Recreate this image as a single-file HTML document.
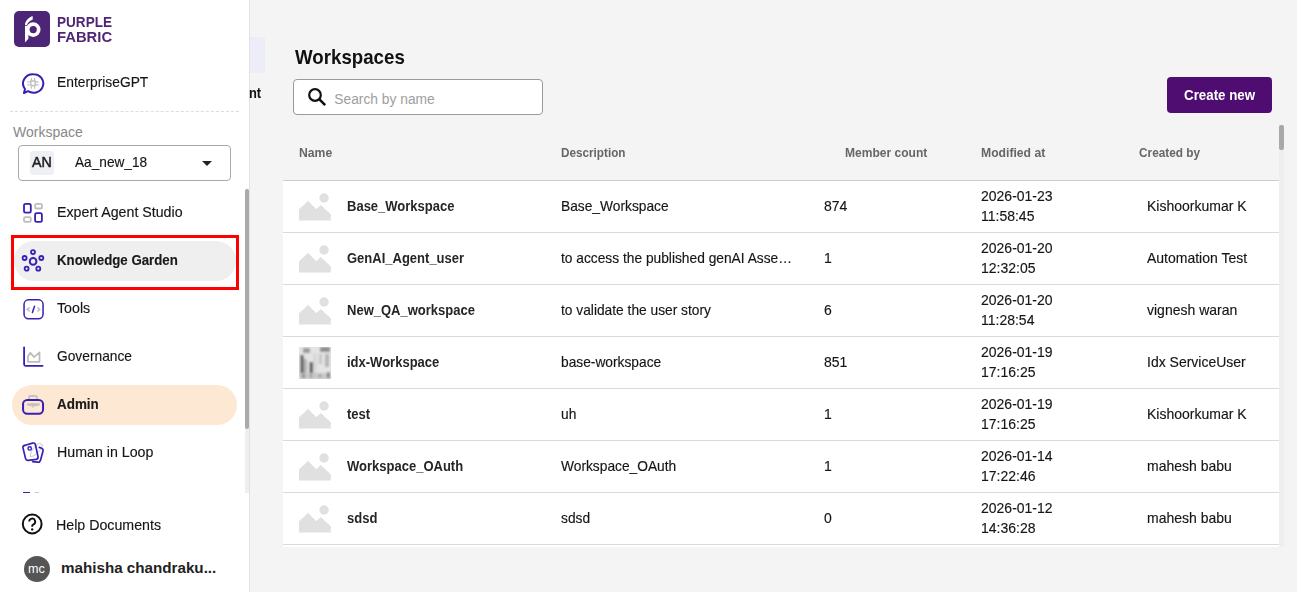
<!DOCTYPE html>
<html><head><meta charset="utf-8">
<style>
*{box-sizing:border-box;margin:0;padding:0}
html,body{width:1297px;height:592px;overflow:hidden;background:#f4f4f4;font-family:"Liberation Sans",sans-serif;color:#1f1f1f}
.abs{position:absolute}
#side{position:absolute;left:0;top:0;width:250px;height:592px;background:#fff;border-right:1px solid #e2e2e2}
#main{position:absolute;left:250px;top:0;width:1047px;height:592px;background:#f4f4f4}
.t{position:absolute;white-space:nowrap;line-height:1}
.nl{left:57px;font-size:15px;color:#151515;-webkit-text-stroke:0.15px #151515;transform:scaleX(0.947);transform-origin:0 0}
.row{position:absolute;left:283px;width:996px;height:52px;background:#fff;border-bottom:1px solid #dadada}
.row .t{font-size:14.6px;color:#151515;-webkit-text-stroke:0.15px #151515;transform:scaleX(0.959);transform-origin:0 0}
.row .nm{left:64px;top:17.9px;font-weight:700;font-size:14.5px;color:#262626;-webkit-text-stroke:0;transform:scaleX(0.897);transform-origin:0 0}
.row .ds{left:278px;top:17.75px;transform:scaleX(0.943)}
.row .mc{left:541px;top:17.8px}
.row .d1{left:698px;top:8.1px}
.row .d2{left:698px;top:28.3px}
.row .cb{left:863.8px;top:17.6px}
.row .img{position:absolute;left:16px;top:12px}
.hdr{position:absolute;top:147.1px;transform-origin:0 0;font-size:12.5px;font-weight:700;color:#666;white-space:nowrap;line-height:1}
</style></head><body>
<div id="side">
  <!-- logo -->
  <div class="abs" style="left:14px;top:11px;width:36px;height:36px;background:#4d2577;border-radius:5px"></div>
  <svg class="abs" style="left:14px;top:11px" width="36" height="36" viewBox="0 0 36 36">
    <path d="M11 14.2 C11 10.5 13.8 6.8 18.6 5 L18.8 8.6 C16.2 9.6 13.6 11.6 12.9 14.2 Z" fill="#fff"/>
    <path d="M11 15 L14.6 15 L14.4 27.8 L11 31.6 Z" fill="#fff"/>
    <circle cx="19.2" cy="18.6" r="5.5" fill="none" stroke="#fff" stroke-width="3.7"/>
  </svg>
  <div class="t" style="left:57px;top:13.7px;font-size:15.5px;font-weight:700;color:#4f2673;line-height:15px;transform:scaleX(0.875);transform-origin:0 0">PURPLE</div>
  <div class="t" style="left:57px;top:28.7px;font-size:15.5px;font-weight:700;color:#4f2673;line-height:15px;transform:scaleX(0.955);transform-origin:0 0">FABRIC</div>

  <!-- EnterpriseGPT -->
  <svg class="abs" style="left:22px;top:73px" width="23" height="21" viewBox="0 0 23 21">
    <path d="M11.5 1.2 A9.8 9.3 0 1 1 6 18.2 L2 20 L3 16 A9.8 9.3 0 0 1 11.5 1.2Z" fill="none" stroke="#3a1fb5" stroke-width="2" stroke-linejoin="round"/>
    <rect x="8.7" y="8" width="4.6" height="4.6" fill="none" stroke="#c2c2c2" stroke-width="1.6"/>
    <path d="M9.4 5v2.2M12.6 5v2.2M9.4 13.4v2.3M12.6 13.4v2.3M5.2 8.8h2.3M5.2 11.8h2.3M14.1 8.8h2.5M14.1 11.8h2.5" stroke="#c2c2c2" stroke-width="1.3"/>
  </svg>
  <div class="t" style="left:57px;top:74.3px;font-size:15px;color:#151515;-webkit-text-stroke:0.15px #151515;transform:scaleX(0.92);transform-origin:0 0">EnterpriseGPT</div>

  <div class="abs" style="left:10px;top:111px;width:229px;border-top:1px dashed #ddd"></div>

  <div class="t" style="left:13px;top:125px;font-size:14px;color:#888">Workspace</div>

  <!-- select -->
  <div class="abs" style="left:18px;top:145px;width:213px;height:36px;border:1px solid #a9a9a9;border-radius:4px"></div>
  <div class="abs" style="left:30px;top:151px;width:24px;height:24px;background:#eef0f5;border-radius:3px"></div>
  <div class="t" style="left:32.3px;top:154.3px;font-size:15px;color:#222;-webkit-text-stroke:0.5px #222;transform:scaleX(0.95);transform-origin:0 0">AN</div>
  <div class="t" style="left:74.5px;top:154.3px;font-size:15px;color:#151515;-webkit-text-stroke:0.15px #151515;transform:scaleX(0.91);transform-origin:0 0">Aa_new_18</div>
  <svg class="abs" style="left:201px;top:160px" width="12" height="7" viewBox="0 0 12 7"><path d="M1 1h10L6 6z" fill="#222"/></svg>

  <!-- nav -->
  <svg class="abs" style="left:18px;top:198px" width="30" height="30" viewBox="0 0 30 30" fill="none" stroke-width="1.8">
    <rect x="6" y="5.9" width="6.8" height="8.7" rx="1.6" stroke="#3a1fb5"/>
    <rect x="17.1" y="5.9" width="6.8" height="4.6" rx="1.6" stroke="#bdbdbd"/>
    <rect x="6" y="19.1" width="6.8" height="4.8" rx="1.6" stroke="#bdbdbd"/>
    <rect x="17.1" y="15.1" width="6.8" height="8.8" rx="1.6" stroke="#3a1fb5"/>
  </svg>
  <div class="t nl" style="top:204.3px">Expert Agent Studio</div>

  <div class="abs" style="left:11px;top:235px;width:228px;height:55px;border:3px solid #ff0000"></div>
  <div class="abs" style="left:14px;top:241px;width:222px;height:40px;background:#efefef;border-radius:20px"></div>
  <svg class="abs" style="left:18px;top:245px" width="30" height="30" viewBox="0 0 30 30" fill="none" stroke="#3a1fb5">
    <path d="M15 13L15 9.5M13 14.5L8.5 13.5M17.2 14.5L21.3 13.5M13 19L10.2 21.8M17.2 19L19 21.8" stroke="#d8dcc8" stroke-width="0.8"/>
    <circle cx="15.1" cy="16.4" r="3.3" stroke-width="2"/>
    <circle cx="15" cy="7.1" r="2" stroke-width="1.8"/>
    <circle cx="6.6" cy="13" r="2" stroke-width="1.8"/>
    <circle cx="23.3" cy="13" r="2" stroke-width="1.8"/>
    <circle cx="8.6" cy="23.7" r="2" stroke-width="1.8"/>
    <circle cx="20.3" cy="23.7" r="2" stroke-width="1.8"/>
  </svg>
  <div class="t nl" style="top:252px;font-size:15.2px;color:#1a1a1a;font-weight:700;transform:scaleX(0.873)">Knowledge Garden</div>

  <svg class="abs" style="left:18px;top:293px" width="30" height="30" viewBox="0 0 30 30" fill="none">
    <rect x="6.05" y="6.85" width="19" height="19" rx="4.5" stroke="#3a1fb5" stroke-width="1.5"/>
    <path d="M11.9 14.4L9.1 16.4L11.9 18.5M19.3 14.4L21.8 16.4L19.3 18.5" stroke="#bdbdbd" stroke-width="1.4"/>
    <path d="M16.5 13.2L14.4 19.5" stroke="#3a1fb5" stroke-width="1.5" stroke-linecap="round"/>
  </svg>
  <div class="t nl" style="top:300.3px">Tools</div>

  <svg class="abs" style="left:18px;top:341px" width="30" height="30" viewBox="0 0 30 30" fill="none">
    <path d="M6.1 6.3V23.3Q6.1 24.8 7.6 24.8H24.6" stroke="#3a1fb5" stroke-width="1.8" stroke-linecap="round"/>
    <path d="M9.9 15.2L12.4 11.9L16.2 16.2L21.5 11.4V20.8H9.9Z" stroke="#bdbdbd" stroke-width="1.8" stroke-linejoin="round"/>
  </svg>
  <div class="t nl" style="top:348.3px;transform:scaleX(0.918)">Governance</div>

  <div class="abs" style="left:12px;top:385px;width:225px;height:40px;background:#fde9d3;border-radius:20px"></div>
  <svg class="abs" style="left:18px;top:389px" width="30" height="30" viewBox="0 0 30 30" fill="none">
    <path d="M11 10.5V7.8Q11 7 11.8 7H18Q18.8 7 18.8 7.8V10.5" stroke="#c4c4c4" stroke-width="1.8"/>
    <path d="M9.4 15.1Q15.4 14.5 21.5 15.1Q21.3 16.4 15.4 16.6Q9.6 16.4 9.4 15.1Z" fill="#c4c4c4" stroke="#c4c4c4" stroke-width="1.4" stroke-linejoin="round"/><path d="M15.1 16.5V18.6" stroke="#c4c4c4" stroke-width="1.6"/>
    <rect x="5.05" y="10.9" width="20" height="13.9" rx="4.2" stroke="#3a1fb5" stroke-width="2"/>
  </svg>
  <div class="t nl" style="top:396.15px;font-size:15.2px;color:#1a1a1a;font-weight:700;transform:scaleX(0.883)">Admin</div>

  <svg class="abs" style="left:18px;top:437px" width="30" height="30" viewBox="0 0 30 30" fill="none">
    <path d="M12.4 19.6Q12.2 14.5 15.5 11Q19.5 6.5 21.5 6.3Q24.6 6.8 24.4 9.5Q22 14 18.5 17Q15 19.8 12.4 19.6Z" stroke="#c8c8c8" stroke-width="1"/>
    <path d="M21.3 10.4L23.2 11Q25.4 11.8 25 14L22.5 23.2Q21.8 25.6 19.5 25.2L14.7 24.6" stroke="#3a1fb5" stroke-width="1.7" stroke-linecap="round"/>
    <path d="M7.3 8.2L14.5 6.1Q17 5.5 17.5 8L20 19.6Q20.4 21.8 18.2 22.4L10.2 23.3Q8 23.6 7.5 21.4L5 10.9Q4.6 8.8 7.3 8.2Z" stroke="#3a1fb5" stroke-width="1.7"/>
    <circle cx="11.7" cy="11.4" r="1.7" stroke="#3a1fb5" stroke-width="1.4"/>
  </svg>
  <div class="t nl" style="top:444.3px">Human in Loop</div>
  <div class="abs" style="left:23px;top:492px;width:7px;height:1px;background:#3a1fb5"></div>
  <div class="abs" style="left:35px;top:492px;width:4px;height:1px;background:#ccc"></div>

  <!-- sidebar scrollbar -->
  <div class="abs" style="left:245px;top:189px;width:4px;height:304px;background:#efefef"></div>
  <div class="abs" style="left:245px;top:189px;width:4px;height:240px;background:#aaaaaa;border-radius:2px"></div>

  <!-- help -->
  <svg class="abs" style="left:21px;top:513.2px" width="23" height="23" viewBox="0 0 23 23">
    <circle cx="11.2" cy="11" r="9.4" fill="none" stroke="#111" stroke-width="2"/>
    <path d="M8.2 8.6a3 3 0 1 1 4.3 2.7c-.8.4-1.3 1-1.3 1.8v.7" fill="none" stroke="#111" stroke-width="1.9"/>
    <circle cx="11.2" cy="16.4" r="1.2" fill="#111"/>
  </svg>
  <div class="t" style="left:56px;top:517.3px;font-size:15px;color:#151515;-webkit-text-stroke:0.15px #151515;transform:scaleX(0.947);transform-origin:0 0">Help Documents</div>

  <div class="abs" style="left:24px;top:556px;width:26px;height:26px;border-radius:50%;background:#555"></div>
  <div class="t" style="left:28px;top:563px;font-size:12.6px;color:#fff">mc</div>
  <div class="t" style="left:61px;top:560px;font-size:15.2px;font-weight:700;color:#222">mahisha chandraku...</div>
</div>

<div id="main">
  <div class="abs" style="left:0;top:37px;width:15px;height:36px;background:#ededfa"></div>
  <div class="t" style="left:-0.6px;top:86.2px;font-size:14px;font-weight:700;color:#111;transform:scaleX(0.92);transform-origin:0 0">nt</div>
</div>

<div class="t" style="left:295px;top:46.1px;font-size:21px;font-weight:700;color:#111;transform:scaleX(0.89);transform-origin:0 0">Workspaces</div>

<div class="abs" style="left:293px;top:79px;width:250px;height:36px;background:#fff;border:1px solid #9a9a9a;border-radius:4px"></div>
<svg class="abs" style="left:306.5px;top:87px" width="20" height="20" viewBox="0 0 20 20">
  <circle cx="8" cy="8" r="5.8" fill="none" stroke="#111" stroke-width="2.2"/>
  <path d="M12.2 12.2l6 6" stroke="#111" stroke-width="2.6"/>
</svg>
<div class="t" style="left:334.3px;top:92.5px;font-size:13.8px;color:#9e9e9e">Search by name</div>

<div class="abs" style="left:1167px;top:77px;width:105px;height:36px;background:#4f0d72;border-radius:4px"></div>
<div class="t" style="left:1184.3px;top:87.1px;font-size:15.5px;font-weight:700;color:#fff;transform:scaleX(0.86);transform-origin:0 0">Create new</div>

<!-- table scrollbar -->
<div class="abs" style="left:1279px;top:125px;width:5px;height:422px;background:#eeeeee;border-radius:0 0 2px 2px"></div>
<div class="abs" style="left:1279px;top:125px;width:5px;height:25px;background:#a8a8a8;border-radius:2px"></div>

<div class="hdr" style="left:299px;transform:scaleX(0.976)">Name</div>
<div class="hdr" style="left:561px;transform:scaleX(0.938)">Description</div>
<div class="hdr" style="left:845px;transform:scaleX(0.963)">Member count</div>
<div class="hdr" style="left:981px;transform:scaleX(0.974)">Modified at</div>
<div class="hdr" style="left:1138.6px;transform:scaleX(0.945)">Created by</div>
<div class="abs" style="left:283px;top:180px;width:996px;height:1px;background:#cdcdcd"></div>
<div class="abs" style="left:283px;top:544px;width:996px;height:3px;background:#fff"></div>

<div id="rows"><div class="row" style="top:181px"><svg class="img" width="32" height="28" viewBox="0 0 32 28"><circle cx="25.06" cy="4.97" r="4.7" fill="#e0e0e0"/><path d="M0 16.2L9.1 7.9L17.4 16.2L21.8 12.1L31.85 21.5V27.4H0Z" fill="#e0e0e0"/></svg><div class="t nm">Base_Workspace</div><div class="t ds">Base_Workspace</div><div class="t mc">874</div><div class="t d1">2026-01-23</div><div class="t d2">11:58:45</div><div class="t cb">Kishoorkumar K</div></div>
<div class="row" style="top:233px"><svg class="img" width="32" height="28" viewBox="0 0 32 28"><circle cx="25.06" cy="4.97" r="4.7" fill="#e0e0e0"/><path d="M0 16.2L9.1 7.9L17.4 16.2L21.8 12.1L31.85 21.5V27.4H0Z" fill="#e0e0e0"/></svg><div class="t nm">GenAI_Agent_user</div><div class="t ds">to access the published genAI Asse…</div><div class="t mc">1</div><div class="t d1">2026-01-20</div><div class="t d2">12:32:05</div><div class="t cb">Automation Test</div></div>
<div class="row" style="top:285px"><svg class="img" width="32" height="28" viewBox="0 0 32 28"><circle cx="25.06" cy="4.97" r="4.7" fill="#e0e0e0"/><path d="M0 16.2L9.1 7.9L17.4 16.2L21.8 12.1L31.85 21.5V27.4H0Z" fill="#e0e0e0"/></svg><div class="t nm">New_QA_workspace</div><div class="t ds">to validate the user story</div><div class="t mc">6</div><div class="t d1">2026-01-20</div><div class="t d2">11:28:54</div><div class="t cb">vignesh waran</div></div>
<div class="row" style="top:337px"><svg class="img" width="32" height="32" viewBox="0 0 32 32" style="top:10px"><defs><filter id="bl" x="0" y="0" width="1" height="1"><feGaussianBlur stdDeviation="0.9"/></filter><clipPath id="cp"><rect width="32" height="32"/></clipPath></defs><g clip-path="url(#cp)"><g filter="url(#bl)"><rect x="-2" y="-2" width="36" height="36" fill="#e4e4e4"/><rect x="4" y="1" width="7" height="5" fill="#9a9a9a"/><rect x="21" y="0" width="10" height="5" fill="#8e8e8e"/><rect x="1.5" y="8" width="3" height="18" fill="#4a4a4a"/><rect x="5" y="12" width="3" height="14" fill="#b0b0b0"/><rect x="10.5" y="15" width="3.5" height="11" fill="#5c5c5c"/><rect x="14" y="6" width="4" height="20" fill="#d8d8d8"/><rect x="20" y="7" width="3" height="10" fill="#c4c4c4"/><rect x="26" y="7" width="4" height="13" fill="#b4b4b4"/><rect x="0" y="26" width="32" height="6" fill="#c8c8c8"/><rect x="3" y="27" width="3" height="4" fill="#8a8a8a"/><rect x="11" y="27" width="2" height="4" fill="#999"/><rect x="20" y="27" width="2" height="4" fill="#9a9a9a"/><rect x="28" y="25" width="2.5" height="6" fill="#777"/></g></g></svg><div class="t nm">idx-Workspace</div><div class="t ds">base-workspace</div><div class="t mc">851</div><div class="t d1">2026-01-19</div><div class="t d2">17:16:25</div><div class="t cb">Idx ServiceUser</div></div>
<div class="row" style="top:389px"><svg class="img" width="32" height="28" viewBox="0 0 32 28"><circle cx="25.06" cy="4.97" r="4.7" fill="#e0e0e0"/><path d="M0 16.2L9.1 7.9L17.4 16.2L21.8 12.1L31.85 21.5V27.4H0Z" fill="#e0e0e0"/></svg><div class="t nm">test</div><div class="t ds">uh</div><div class="t mc">1</div><div class="t d1">2026-01-19</div><div class="t d2">17:16:25</div><div class="t cb">Kishoorkumar K</div></div>
<div class="row" style="top:441px"><svg class="img" width="32" height="28" viewBox="0 0 32 28"><circle cx="25.06" cy="4.97" r="4.7" fill="#e0e0e0"/><path d="M0 16.2L9.1 7.9L17.4 16.2L21.8 12.1L31.85 21.5V27.4H0Z" fill="#e0e0e0"/></svg><div class="t nm">Workspace_OAuth</div><div class="t ds">Workspace_OAuth</div><div class="t mc">1</div><div class="t d1">2026-01-14</div><div class="t d2">17:22:46</div><div class="t cb">mahesh babu</div></div>
<div class="row" style="top:493px"><svg class="img" width="32" height="28" viewBox="0 0 32 28"><circle cx="25.06" cy="4.97" r="4.7" fill="#e0e0e0"/><path d="M0 16.2L9.1 7.9L17.4 16.2L21.8 12.1L31.85 21.5V27.4H0Z" fill="#e0e0e0"/></svg><div class="t nm">sdsd</div><div class="t ds">sdsd</div><div class="t mc">0</div><div class="t d1">2026-01-12</div><div class="t d2">14:36:28</div><div class="t cb">mahesh babu</div></div></div>
</body></html>
